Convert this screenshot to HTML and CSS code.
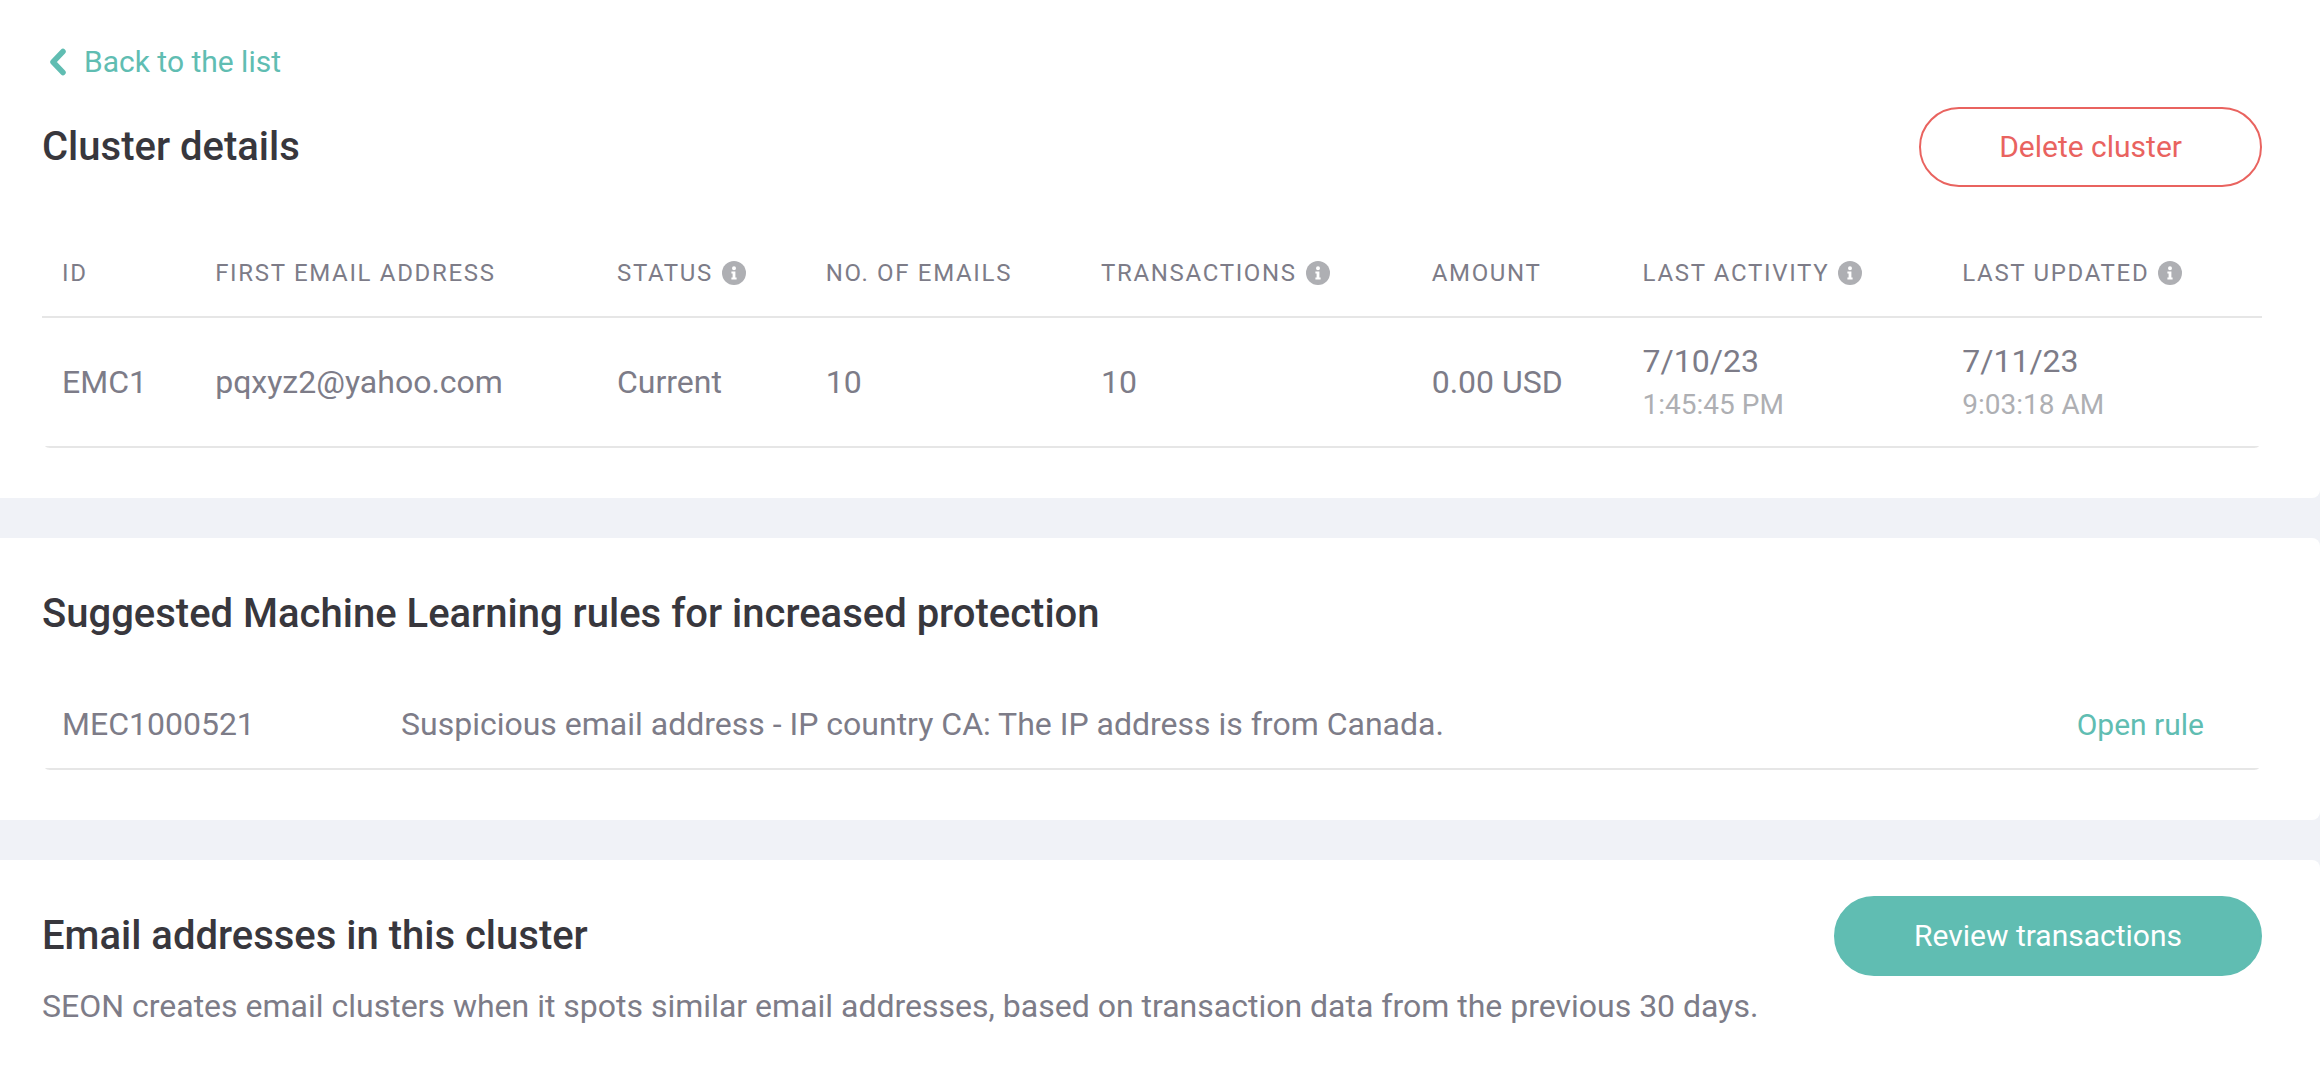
FILE: index.html
```
<!DOCTYPE html>
<html lang="en">
<head>
  <meta charset="UTF-8" />
  <meta name="viewport" content="width=device-width, initial-scale=1" />
  <title>Cluster details</title>
  <link rel="stylesheet" href="styles.css">
</head>
<body>
  <svg width="0" height="0" class="sprite" aria-hidden="true">
    <symbol id="info" viewBox="0 0 24 24">
      <circle cx="12" cy="12" r="12" fill="#aeafb3" />
      <path fill="#fff" d="M12 5.200a2 2 0 1 1 0 4 2 2 0 0 1 0-4zM9.400 10.400h4v6h1.200V18.500H9.400v-2.100h1.200v-3.900H9.400z" />
    </symbol>
  </svg>

  <section class="card">
    <a href="#" class="back">
      <svg class="chevron" viewBox="0 0 18 28"><path d="M14 3.500L4 14l10 10.500" /></svg>
      Back to the list
    </a>
    <div class="card-head">
      <h2>Cluster details</h2>
      <button type="button" class="btn btn-delete">Delete cluster</button>
    </div>
    <div class="table-wrap cluster">
      <table>
        <thead>
          <tr>
            <th class="col-id">ID</th>
            <th class="col-email">First email address</th>
            <th class="col-status">Status<svg class="info"><use href="#info" /></svg></th>
            <th class="col-count">No. of emails</th>
            <th class="col-trans">Transactions<svg class="info"><use href="#info" /></svg></th>
            <th class="col-amount">Amount</th>
            <th class="col-date">Last activity<svg class="info"><use href="#info" /></svg></th>
            <th class="col-date">Last updated<svg class="info"><use href="#info" /></svg></th>
          </tr>
        </thead>
        <tbody>
          <tr>
            <td>EMC1</td>
            <td>pqxyz2@yahoo.com</td>
            <td>Current</td>
            <td>10</td>
            <td>10</td>
            <td>0.00 USD</td>
            <td><div class="date">7/10/23</div><div class="time">1:45:45 PM</div></td>
            <td><div class="date">7/11/23</div><div class="time">9:03:18 AM</div></td>
          </tr>
        </tbody>
      </table>
    </div>
  </section>

  <section class="card">
    <div class="card-head">
      <h2>Suggested Machine Learning rules for increased protection</h2>
    </div>
    <div class="table-wrap rules">
      <table>
        <tbody>
          <tr>
            <td class="rule-id">MEC1000521</td>
            <td>Suspicious email address - IP country CA: The IP address is from Canada.</td>
            <td class="rule-link"><a href="#">Open rule</a></td>
          </tr>
        </tbody>
      </table>
    </div>
  </section>

  <section class="card">
    <div class="card-head">
      <h2>Email addresses in this cluster</h2>
      <button type="button" class="btn btn-review">Review transactions</button>
    </div>
    <p class="intro">SEON creates email clusters when it spots similar email addresses, based on transaction data from the previous 30 days.</p>
  </section>
</body>
</html>
```
FILE: styles.css
```
* {
  box-sizing: border-box;
}
body {
  margin: 0;
  min-height: 100vh;
  display: flex;
  flex-direction: column;
  gap: 40px;
  background: #f0f2f7;
  color: #7d7c88;
  font-family: Roboto, sans-serif;
  font-size: 32px;
}
.sprite {
  position: absolute;
}
a {
  color: #60bdb2;
  text-decoration: none;
}
.card {
  background: #fff;
  border-radius: 0 8px 8px 0;
  padding: 36px 58px 50px 42px;
}
.card:first-of-type {
  border-top-right-radius: 0;
}
.card:last-child {
  flex: 1;
  border-bottom-right-radius: 0;
}
.back {
  display: flex;
  align-items: center;
  gap: 17px;
  padding-left: 7px;
  margin-bottom: 19px;
  font-size: 30px;
  line-height: 52px;
}
.chevron {
  width: 18px;
  height: 28px;
  fill: none;
  stroke: #60bdb2;
  stroke-width: 5.5;
  stroke-linecap: round;
  stroke-linejoin: round;
}
.card-head {
  display: flex;
  justify-content: space-between;
  align-items: center;
  min-height: 80px;
}
h2 {
  margin: 0;
  padding-bottom: 2px;
  color: #38373d;
  font-size: 40px;
  font-weight: 500;
}
.btn {
  height: 80px;
  padding: 0 78px 2px;
  border: 2px solid #60bdb2;
  border-radius: 40px;
  font-family: inherit;
  font-size: 30px;
  cursor: pointer;
}
.btn-delete {
  background: #fff;
  border-color: #e9635f;
  color: #e9635f;
}
.btn-review {
  background: #60bdb2;
  color: #fff;
}
.table-wrap {
  border-radius: 8px;
  overflow: hidden;
}
table {
  width: 100%;
  table-layout: fixed;
  border-spacing: 0;
}
th, td {
  padding: 0 20px;
  border-bottom: 2px solid #e6e6e6;
  text-align: left;
  white-space: nowrap;
}
th {
  height: 89px;
  font-size: 24px;
  font-weight: 400;
  letter-spacing: 0.07em;
  text-transform: uppercase;
}
.info {
  width: 24px;
  height: 24px;
  margin-left: 9px;
  vertical-align: -4px;
}
.cluster {
  margin-top: 42px;
}
.cluster td {
  height: 130px;
}
.col-id { width: 6.9%; }
.col-email { width: 18.1%; }
.col-status { width: 9.4%; }
.col-count { width: 12.4%; }
.col-trans { width: 14.9%; }
.col-amount { width: 9.5%; }
.col-date { width: 14.4%; }
.date {
  line-height: 44px;
}
.time {
  margin-top: 2px;
  color: #aeafb3;
  font-size: 28px;
  line-height: 40px;
}
.rules {
  margin-top: 26px;
}
.rules td {
  height: 90px;
}
.rules .rule-id {
  width: 339px;
}
.rules .rule-link {
  width: 260px;
  padding-right: 58px;
  font-size: 30px;
  text-align: right;
}
.intro {
  margin: 6px 0 0;
  line-height: 48px;
}
```
